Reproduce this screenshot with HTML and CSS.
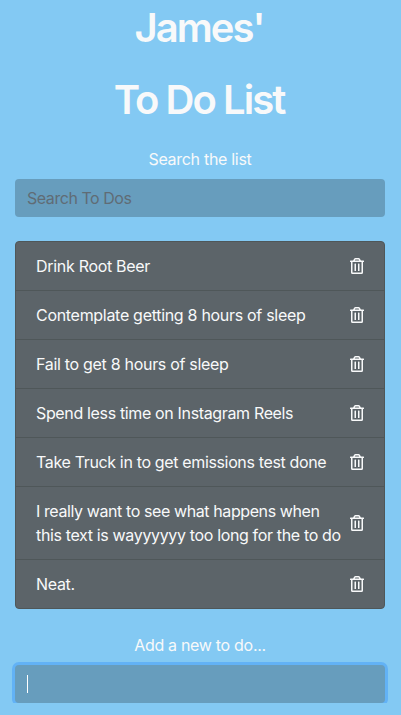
FILE: index.html
```
<!DOCTYPE html>
<html lang="en">
<head>
<meta charset="utf-8">
<title>To Do List</title>
<link rel="stylesheet" href="styles.css">
</head>
<body>
<svg class="defs" width="0" height="0" aria-hidden="true">
  <symbol id="trash" viewBox="0 0 448 512"><path d="M268 416h24a12 12 0 0 0 12-12V188a12 12 0 0 0-12-12h-24a12 12 0 0 0-12 12v216a12 12 0 0 0 12 12zM432 80h-82.41l-34-56.7A48 48 0 0 0 274.41 0H173.59a48 48 0 0 0-41.16 23.3L98.41 80H16A16 16 0 0 0 0 96v16a16 16 0 0 0 16 16h16v336a48 48 0 0 0 48 48h288a48 48 0 0 0 48-48V128h16a16 16 0 0 0 16-16V96a16 16 0 0 0-16-16zM171.84 50.91A6 6 0 0 1 177 48h94a6 6 0 0 1 5.15 2.91L293.61 80H154.39zM368 464H80V128h288zm-212-48h24a12 12 0 0 0 12-12V188a12 12 0 0 0-12-12h-24a12 12 0 0 0-12 12v216a12 12 0 0 0 12 12z"/></symbol>
</svg>
<main class="container">
  <h1 class="title">James'</h1>
  <h1 class="title">To Do List</h1>
  <label class="label search-label">Search the list</label>
  <div class="field"><span class="placeholder">Search To Dos</span></div>
  <ul class="list">
    <li class="item"><span>Drink Root Beer</span><svg class="icon"><use href="#trash"/></svg></li>
    <li class="item"><span>Contemplate getting 8 hours of sleep</span><svg class="icon"><use href="#trash"/></svg></li>
    <li class="item"><span>Fail to get 8 hours of sleep</span><svg class="icon"><use href="#trash"/></svg></li>
    <li class="item"><span class="tight">Spend less time on Instagram Reels</span><svg class="icon"><use href="#trash"/></svg></li>
    <li class="item"><span class="tight">Take Truck in to get emissions test done</span><svg class="icon"><use href="#trash"/></svg></li>
    <li class="item"><span><span class="tighter">I really want to see what happens when</span><br><span class="tight">this text is wayyyyyy too long for the to do</span></span><svg class="icon"><use href="#trash"/></svg></li>
    <li class="item"><span>Neat.</span><svg class="icon"><use href="#trash"/></svg></li>
  </ul>
  <label class="label">Add a new to do...</label>
  <div class="field focused"><span class="caret"></span></div>
</main>
</body>
</html>
```
FILE: styles.css
```
* { box-sizing: border-box; }
body {
  margin: 0;
  background: #83c9f3;
  color: #f8f9fa;
  font-family: Inter, "Liberation Sans", sans-serif;
  font-size: 16px;
  line-height: 24px;
  letter-spacing: -0.3px;
  overflow: hidden;
}
.defs { display: block; }
.container { padding: 4px 16px 0 15px; }
.title {
  margin: 0 0 24px;
  padding-right: 2px;
  font-size: 40px;
  line-height: 48px;
  font-weight: 600;
  letter-spacing: -1.95px;
  text-align: center;
}
.label { display: block; margin-bottom: 8px; text-align: center; }
.search-label { margin-top: -1px; }
.field {
  display: flex;
  align-items: center;
  height: 38px;
  padding: 0 12px;
  border-radius: 4px;
  background: #679dbd;
}
.placeholder { color: #606c75; letter-spacing: -0.45px; }
.list {
  list-style: none;
  margin: 24px 0;
  padding: 0;
  border: 1px solid #4f5759;
  border-radius: 4px;
  background: #5c6469;
}
.item {
  display: flex;
  align-items: center;
  justify-content: space-between;
  padding: 12px 20px;
  border-bottom: 1px solid #4f5759;
  white-space: nowrap;
}
.item:last-child { border-bottom: 0; }
.item > span { width: 0; }
.tight { letter-spacing: -0.35px; }
.tighter { letter-spacing: -0.4px; }
.icon { width: 14px; height: 16px; flex: none; fill: #f8f9fa; }
.focused { box-shadow: 0 0 0 3px #62b2f6; }
.caret { width: 1px; height: 18px; background: #fff; }
```
